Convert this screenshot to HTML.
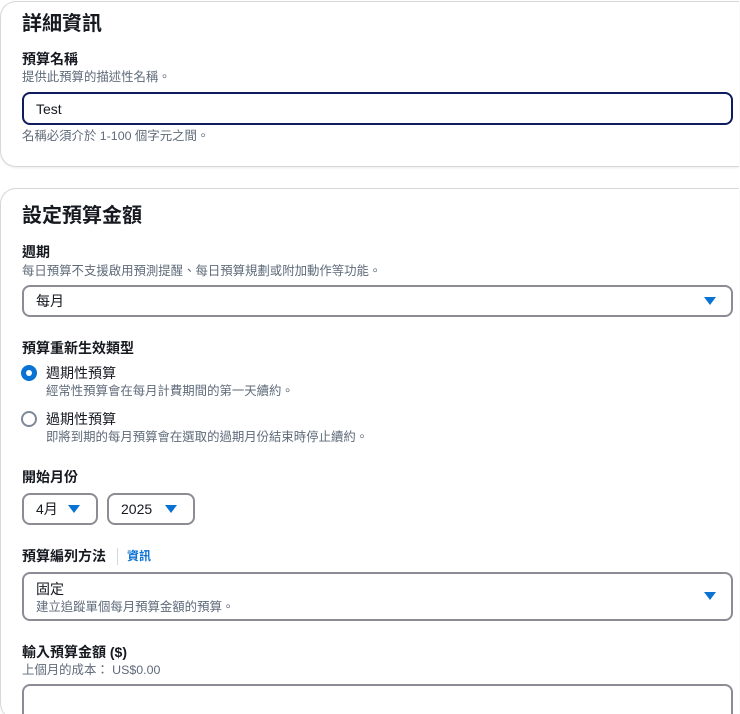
<!DOCTYPE html>
<html style="height:714px;overflow:hidden"><head><meta charset="utf-8"><style>
body{margin:0;width:740px;height:714px;overflow:hidden;background:#fff;font-family:"Liberation Sans","Noto Sans CJK TC",sans-serif;color:#16191f;position:relative}
.a{position:absolute;white-space:nowrap}
.card{position:absolute;left:0;width:738px;border:1px solid #d5d7db;border-right:none;border-radius:16px 0 0 16px;background:#fff;box-shadow:0 1px 2px rgba(0,0,0,.08)}
h2{position:absolute;margin:0;font-size:20px;font-weight:700;left:22px;line-height:24px}
.lbl{font-size:14px;font-weight:700;line-height:18px;left:22px}
.desc{font-size:12.4px;color:#5f6b7a;line-height:16px}
.box{position:absolute;border:2px solid #8c8c94;border-radius:8px;box-sizing:border-box;background:#fff}
.arr{position:absolute;width:0;height:0;border-left:6px solid transparent;border-right:6px solid transparent;border-top:8px solid #0972d3}
.v{position:absolute;font-size:14px;line-height:18px}
</style></head><body>
<div class="card" style="top:1px;height:164px"></div>
<div class="card" style="top:188px;height:530px;border-bottom:none"></div>
<h2 style="top:12px">詳細資訊</h2>
<div class="a lbl" style="top:50px">預算名稱</div>
<div class="a desc" style="left:22px;top:69px">提供此預算的描述性名稱。</div>
<div class="box" style="left:22px;top:92px;width:711px;height:33px;border-color:#0f1b5f"><span class="v" style="left:12px;top:6px">Test</span></div>
<div class="a desc" style="left:22px;top:128px">名稱必須介於 1-100 個字元之間。</div>

<h2 style="top:204px">設定預算金額</h2>
<div class="a lbl" style="top:243px">週期</div>
<div class="a desc" style="left:22px;top:263px">每日預算不支援啟用預測提醒、每日預算規劃或附加動作等功能。</div>
<div class="box" style="left:22px;top:285px;width:711px;height:32px"><span class="v" style="left:12px;top:5px">每月</span><div class="arr" style="left:680px;top:10px"></div></div>

<div class="a lbl" style="top:339px">預算重新生效類型</div>
<div class="a" style="left:21px;top:365px;width:16px;height:16px;border-radius:50%;background:#0972d3"><div style="position:absolute;left:5px;top:5px;width:6px;height:6px;border-radius:50%;background:#fff"></div></div>
<div class="a v" style="left:46px;top:364px">週期性預算</div>
<div class="a desc" style="left:46px;top:383px">經常性預算會在每月計費期間的第一天續約。</div>
<div class="a" style="left:21px;top:411px;width:12px;height:12px;border-radius:50%;border:2px solid #7d8998"></div>
<div class="a v" style="left:46px;top:410px">過期性預算</div>
<div class="a desc" style="left:46px;top:429px">即將到期的每月預算會在選取的過期月份結束時停止續約。</div>

<div class="a lbl" style="top:468px">開始月份</div>
<div class="box" style="left:22px;top:493px;width:76px;height:32px"><span class="v" style="left:12px;top:5px">4月</span><div class="arr" style="left:44px;top:10px"></div></div>
<div class="box" style="left:107px;top:493px;width:88px;height:32px"><span class="v" style="left:12px;top:5px">2025</span><div class="arr" style="left:56px;top:10px"></div></div>

<div class="a lbl" style="top:547px">預算編列方法</div>
<div class="a" style="left:117px;top:548px;width:1px;height:17px;background:#d5d7db"></div>
<div class="a" style="left:127px;top:548px;font-size:12px;font-weight:700;color:#0972d3;line-height:17px">資訊</div>
<div class="box" style="left:22px;top:572px;width:711px;height:49px"><span class="v" style="left:12px;top:6px">固定</span><span class="a desc" style="left:12px;top:25px">建立追蹤單個每月預算金額的預算。</span><div class="arr" style="left:680px;top:18px"></div></div>

<div class="a lbl" style="top:643px">輸入預算金額 ($)</div>
<div class="a desc" style="left:22px;top:662px">上個月的成本： US$0.00</div>
<div class="box" style="left:22px;top:684px;width:711px;height:30px;border-bottom:none;border-radius:8px 8px 0 0"></div>
</body></html>
